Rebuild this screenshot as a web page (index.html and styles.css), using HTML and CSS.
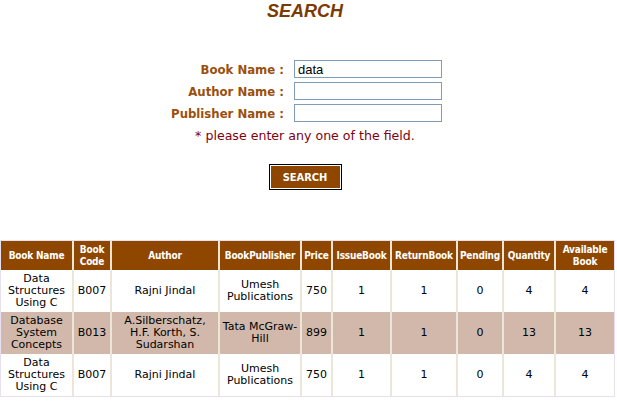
FILE: index.html
```html
<!DOCTYPE html>
<html>
<head>
<meta charset="utf-8">
<link rel="stylesheet" href="styles.css">
</head>
<body>
<h1 class="title">SEARCH</h1>
<form class="search-form">
  <div class="field-grid">
    <label class="lbl">Book Name :</label>
    <input class="txt" type="text" value="data">
    <label class="lbl">Author Name :</label>
    <input class="txt" type="text">
    <label class="lbl">Publisher Name :</label>
    <input class="txt" type="text">
  </div>
  <p class="note">* please enter any one of the field.</p>
  <button class="btn" type="button">SEARCH</button>
</form>
<table class="books">
  <thead>
    <tr>
      <th class="c-name">Book Name</th>
      <th class="c-code">Book Code</th>
      <th class="c-author">Author</th>
      <th class="c-pub">BookPublisher</th>
      <th class="c-price">Price</th>
      <th class="c-issue">IssueBook</th>
      <th class="c-return">ReturnBook</th>
      <th class="c-pend">Pending</th>
      <th class="c-qty">Quantity</th>
      <th class="c-avail">Available Book</th>
    </tr>
  </thead>
  <tbody>
    <tr>
      <td>Data Structures Using C</td>
      <td>B007</td>
      <td>Rajni Jindal</td>
      <td>Umesh Publications</td>
      <td>750</td>
      <td>1</td>
      <td>1</td>
      <td>0</td>
      <td>4</td>
      <td>4</td>
    </tr>
    <tr class="alt">
      <td>Database System Concepts</td>
      <td>B013</td>
      <td>A.Silberschatz, H.F. Korth, S. Sudarshan</td>
      <td>Tata McGraw-Hill</td>
      <td>899</td>
      <td>1</td>
      <td>1</td>
      <td>0</td>
      <td>13</td>
      <td>13</td>
    </tr>
    <tr>
      <td>Data Structures Using C</td>
      <td>B007</td>
      <td>Rajni Jindal</td>
      <td>Umesh Publications</td>
      <td>750</td>
      <td>1</td>
      <td>1</td>
      <td>0</td>
      <td>4</td>
      <td>4</td>
    </tr>
  </tbody>
</table>
</body>
</html>
```
FILE: styles.css
```css
html, body {
  margin: 0;
  padding: 0;
  background: #ffffff;
}
body {
  width: 617px;
  font-family: "DejaVu Sans", Verdana, sans-serif;
}
.title {
  margin: 0;
  padding-top: 1px;
  height: 22px;
  text-align: center;
  font-family: "Liberation Sans", Arial, sans-serif;
  font-weight: bold;
  font-style: italic;
  font-size: 18px;
  line-height: 20px;
  color: #7b3b00;
  text-indent: -7px;
}
.search-form {
  margin: 0;
  padding-top: 37px;
  display: flex;
  flex-direction: column;
  align-items: center;
}
.field-grid {
  display: grid;
  grid-template-columns: 115px 148px;
  column-gap: 10px;
  row-gap: 4px;
  align-items: center;
  margin-left: -6px;
}
.lbl {
  text-align: right;
  font-family: "DejaVu Sans Condensed", Tahoma, sans-serif;
  font-weight: bold;
  font-size: 13px;
  color: #9c4f0c;
  white-space: nowrap;
}
.txt {
  box-sizing: border-box;
  width: 148px;
  height: 18px;
  margin: 0;
  padding: 0 3px;
  border: 1px solid #7f9db9;
  font-family: "Liberation Sans", Arial, sans-serif;
  font-size: 13px;
  color: #000;
  background: #fff;
}
.note {
  margin: 6px 0 0 -7px;
  font-size: 12.6px;
  line-height: 15px;
  color: #7f0010;
}
.btn {
  margin-top: 21px;
  width: 73px;
  height: 26px;
  padding: 0;
  background: #8f4700;
  border: 1px solid #000;
  box-shadow: inset 0 0 0 1px #ffffff;
  color: #ffffff;
  font-family: "DejaVu Sans Condensed", Tahoma, sans-serif;
  font-weight: bold;
  font-size: 11px;
  margin-left: -7px;
}
.books {
  margin-top: 50px;
  width: 615px;
  border-collapse: separate;
  border-spacing: 0;
  border: 1px solid #e6e0f0;
  table-layout: fixed;
}
.books th, .books td {
  box-sizing: border-box;
  border-right: 2px solid #ece6d9;
  text-align: center;
  vertical-align: middle;
}
.books th:last-child, .books td:last-child {
  border-right: none;
}
.books th {
  height: 29px;
  padding: 0 1px;
  background: #8f4700;
  color: #ffffff;
  font-family: "DejaVu Sans Condensed", Tahoma, sans-serif;
  font-weight: bold;
  font-size: 10px;
  line-height: 12px;
  letter-spacing: -0.2px;
}
.books td {
  height: 42px;
  padding: 0 2px;
  font-size: 11px;
  line-height: 12px;
  color: #000;
  background: #ffffff;
}
.books tr.alt td {
  background: #d1b8aa;
}
.c-name { width: 73px; }
.c-code { width: 38px; }
.c-author { width: 108px; }
.c-pub { width: 82px; }
.c-price { width: 31px; }
.c-issue { width: 59px; }
.c-return { width: 66px; }
.c-pend { width: 46px; }
.c-qty { width: 52px; }
.c-avail { width: 58px; }
```
